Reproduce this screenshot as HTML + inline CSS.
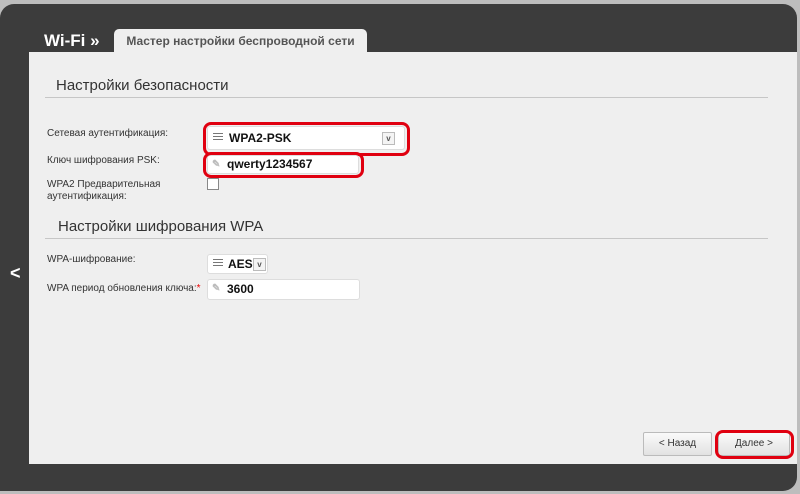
<!DOCTYPE html><html><head><meta charset="utf-8"><style>
body{margin:0;width:800px;height:494px;background:#bdbdbd;position:relative;overflow:hidden;font-family:"Liberation Sans",sans-serif}
.dark{position:absolute;left:0;top:4px;width:797px;height:487px;background:#3c3c3c;border-radius:14px 14px 14px 0}
.content{position:absolute;left:29px;top:52px;width:768px;height:412px;background:#efefef}
.tab{position:absolute;left:114px;top:29px;width:253px;height:24px;background:#efefef;border-radius:5px 5px 0 0;font-size:12px;font-weight:bold;color:#555;text-align:center;line-height:24px}
.wifi{position:absolute;left:44px;top:31px;color:#fff;font-size:17px;font-weight:bold}
.h{position:absolute;font-size:15px;color:#333}
.hr{position:absolute;left:45px;width:723px;border-top:1px solid #c6c6c6}
.l{position:absolute;font-size:10px;color:#333;left:47px;line-height:12px}
.inp{position:absolute;background:#fff;border:1px solid #ddd;border-radius:3px;font-size:12px;font-weight:bold;color:#111}
.red{position:absolute;border:3px solid #e00010;border-radius:8px}
.btn{position:absolute;top:432px;height:22px;background:linear-gradient(#fafafa,#e2e2e2);border:1px solid #bbb;border-radius:2px;font-size:10px;color:#333;text-align:center;line-height:22px}
.ic{position:absolute;left:5px;top:4px;width:10px;height:9px;background:repeating-linear-gradient(#777 0 1px,transparent 1px 3px)}
.pen{position:absolute;left:4px;top:3px;color:#bbb;font-size:10px}
.dd{position:absolute;width:11px;height:11px;border:1px solid #bbb;background:#f4f4f4;font-size:8px;text-align:center;line-height:11px;color:#555}
</style></head><body>
<div class="dark"></div>
<div class="content"></div>
<div class="wifi">Wi-Fi »</div>
<div class="tab">Мастер настройки беспроводной сети</div>
<div style="position:absolute;left:10px;top:263px;color:#fff;font-size:18px;font-weight:bold">&lt;</div>
<div class="h" style="left:56px;top:77px">Настройки безопасности</div>
<div class="hr" style="top:97px"></div>
<div class="l" style="top:128px">Сетевая аутентификация:</div>
<div class="l" style="top:155px">Ключ шифрования PSK:</div>
<div class="l" style="top:179px">WPA2 Предварительная<br>аутентификация:</div>
<div class="inp" style="left:207px;top:126px;width:196px;height:22px"><div class="ic" style="top:6px"></div><span style="position:absolute;left:21px;top:4px">WPA2-PSK</span><div class="dd" style="left:174px;top:5px">v</div></div>
<div class="red" style="left:203px;top:122px;width:201px;height:28px"></div>
<div class="inp" style="left:207px;top:155px;width:150px;height:17px"><span class="pen">✎</span><span style="position:absolute;left:19px;top:1px">qwerty1234567</span></div>
<div class="red" style="left:203px;top:152px;width:155px;height:20px"></div>
<div style="position:absolute;left:207px;top:178px;width:10px;height:10px;border:1px solid #888;background:#fff"></div>
<div class="h" style="left:58px;top:218px">Настройки шифрования WPA</div>
<div class="hr" style="top:238px"></div>
<div class="l" style="top:254px">WPA-шифрование:</div>
<div class="l" style="top:283px">WPA период обновления ключа:<span style="color:#e00">*</span></div>
<div class="inp" style="left:207px;top:254px;width:59px;height:18px"><div class="ic"></div><span style="position:absolute;left:20px;top:2px">AES</span><div class="dd" style="left:45px;top:3px">v</div></div>
<div class="inp" style="left:207px;top:279px;width:151px;height:19px"><span class="pen">✎</span><span style="position:absolute;left:19px;top:2px">3600</span></div>
<div class="btn" style="left:643px;width:67px">&lt; Назад</div>
<div class="btn" style="left:718px;width:70px">Далее &gt;</div>
<div class="red" style="left:715px;top:430px;width:73px;height:23px"></div>
</body></html>
